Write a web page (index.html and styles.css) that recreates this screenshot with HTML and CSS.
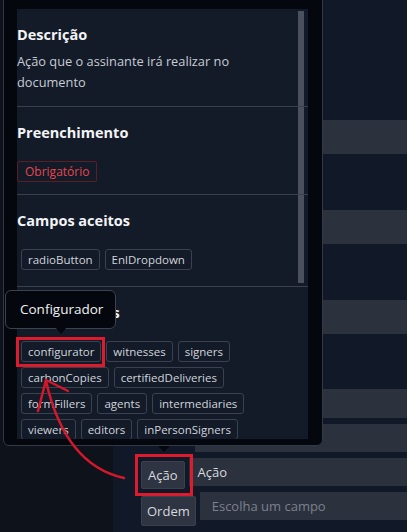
FILE: index.html
```html
<!DOCTYPE html>
<html lang="pt-BR">
<head>
  <meta charset="UTF-8">
  <title>Campo - Ação</title>
  <link rel="stylesheet" href="styles.css">
</head>
<body>

  <div class="page">
    <div class="side"></div>
    <div class="main">
      <div class="band"></div>
      <div class="band"></div>
      <div class="band"></div>
      <div class="band sm"></div>
      <div class="band sm"></div>

      <div class="field-row">
        <span class="addon">Ação</span>
        <div class="input">Ação</div>
      </div>
      <div class="field-row">
        <span class="addon">Ordem</span>
        <div class="input placeholder">Escolha um campo</div>
      </div>
    </div>

    <!-- info popover attached to the "Ação" addon -->
    <div class="popover">
      <div class="popover-body">
        <div class="thumb"></div>

        <div class="section">
          <h3>Descrição</h3>
          <p>Ação que o assinante irá realizar no documento</p>
        </div>

        <div class="section">
          <h3>Preenchimento</h3>
          <div class="badges">
            <span class="badge required">Obrigatório</span>
          </div>
        </div>

        <div class="section">
          <h3>Campos aceitos</h3>
          <div class="tags">
            <span class="tag">radioButton</span>
            <span class="tag">EnlDropdown</span>
          </div>
        </div>

        <div class="section">
          <h3>Papéis aceitos</h3>
          <div class="tags">
            <span class="tag">configurator</span>
            <span class="tag">witnesses</span>
            <span class="tag">signers</span>
            <span class="tag">carbonCopies</span>
            <span class="tag">certifiedDeliveries</span>
            <span class="tag">formFillers</span>
            <span class="tag">agents</span>
            <span class="tag">intermediaries</span>
            <span class="tag">viewers</span>
            <span class="tag">editors</span>
            <span class="tag">inPersonSigners</span>
          </div>
        </div>

        <div class="section">
          <h3>Observações</h3>
          <p>Selecione o papel do assinante para este campo</p>
        </div>
      </div>
      <span class="popover-arrow"></span>
    </div>

    <!-- tooltip over the "configurator" tag -->
    <div class="tooltip">Configurador</div>

    <!-- highlights -->
    <div class="mark mark-tag"></div>
    <div class="mark mark-addon"></div>

    <svg class="pointer" width="407" height="532" viewBox="0 0 407 532">
      <path d="M124 478 Q65 465 46 381" />
      <path d="M46 380 L38 411" />
      <path d="M46 380 L68 391" />
    </svg>
  </div>

</body>
</html>
```

FILE: styles.css
```css
body {
  margin: 0;
  background-color: #111827;
  font-family: "Open Sans", "Noto Sans", Arial, sans-serif;
  color: #d1d5db;
  overflow: hidden;
}
.page {
  position: relative;
  display: flex;
  width: 407px;
  height: 532px;
}
.side {
  width: 113px;
  background-color: #0d121b;
}
.main {
  flex: 1;
  padding: 120px 0 0 28px;
}
.band {
  height: 34px;
  margin: 0 0 56px 54px;
  background-color: #2b313d;
}
.band:nth-child(3) {
  margin-bottom: 55px;
}
.band.sm {
  height: 29px;
  margin-bottom: 6px;
}
.band.sm + .band.sm {
  height: 28px;
}
.field-row {
  display: flex;
  gap: 4px;
  height: 28px;
  margin-bottom: 6px;
}
.addon {
  display: flex;
  align-items: center;
  padding: 0 6px;
  margin-top: 3px;
  height: 28px;
  background-color: #2e3441;
  border: 1px solid #3a404d;
  border-radius: 2px;
  font-size: 13px;
  color: #d6d9df;
  box-sizing: border-box;
}
.field-row + .field-row .addon {
  margin-top: 4px;
  height: 30px;
  padding: 0 5px;
}
.input {
  flex: 1;
  display: flex;
  align-items: center;
  padding-left: 9px;
  background-color: #2b313d;
  font-size: 13px;
  color: #d6d9df;
}
.input.placeholder {
  padding-left: 12px;
  color: #7b818d;
}

/* popover */
.popover {
  position: absolute;
  left: 3px;
  top: -10px;
  width: 320px;
  height: 456px;
  box-sizing: border-box;
  padding: 18px 14px 6px 13px;
  background-color: #04070e;
  border: 1px solid #343a45;
  border-radius: 6px;
}
.popover-arrow {
  position: absolute;
  left: 154px;
  bottom: -7px;
  width: 0;
  height: 0;
  border-left: 6px solid transparent;
  border-right: 6px solid transparent;
  border-top: 6px solid #04070e;
}
.popover-body {
  position: relative;
  height: 100%;
  overflow: hidden;
  background-color: #131a28;
}
.thumb {
  position: absolute;
  right: 4px;
  top: 2px;
  width: 6px;
  height: 272px;
  background-color: #4a505c;
}
.section {
  position: relative;
  padding: 14px 0 13px;
  border-bottom: 1px solid #3a404c;
}
.section h3 {
  margin: 0 0 4px;
  font-size: 14.5px;
  line-height: 24px;
  font-weight: 700;
  color: #f3f4f6;
}
.section p {
  margin: 0;
  padding-right: 14px;
  font-size: 12.8px;
  line-height: 21px;
  color: #c8ccd4;
}
.badges {
  display: flex;
  margin: 16px 0 -1px;
}
.badge {
  padding: 0 7px;
  font-size: 12px;
  line-height: 19px;
  border: 1px solid #5a1e27;
  border-radius: 2px;
}
.badge.required {
  color: #e5484d;
}
.tags {
  display: flex;
  flex-wrap: wrap;
  gap: 5px;
  margin: 16px 0 3px;
  padding: 0 24px 0 4px;
}
.tag {
  padding: 0 6px;
  font-size: 11.5px;
  line-height: 19px;
  color: #d1d5db;
  border: 1px solid #3b4150;
  border-radius: 3px;
}

/* tooltip */
.tooltip {
  position: absolute;
  left: 5px;
  top: 290px;
  width: 111px;
  height: 39px;
  box-sizing: border-box;
  padding-left: 14px;
  line-height: 37px;
  font-size: 13.5px;
  color: #f2f2f2;
  background-color: #04070e;
  border: 1px solid #3d424d;
  border-radius: 6px;
}
.tooltip::after {
  content: "";
  position: absolute;
  left: 50px;
  bottom: -6px;
  border-left: 5px solid transparent;
  border-right: 5px solid transparent;
  border-top: 6px solid #04070e;
}

.mark {
  position: absolute;
  border: 3px solid #dc1b2c;
  box-sizing: border-box;
}
.mark-tag {
  left: 16px;
  top: 337px;
  width: 89px;
  height: 30px;
}
.mark-addon {
  left: 135px;
  top: 454px;
  width: 58px;
  height: 42px;
}
.pointer {
  position: absolute;
  left: 0;
  top: 0;
  fill: none;
  stroke: #d3182b;
  stroke-width: 2.5;
  stroke-linecap: round;
}
```
